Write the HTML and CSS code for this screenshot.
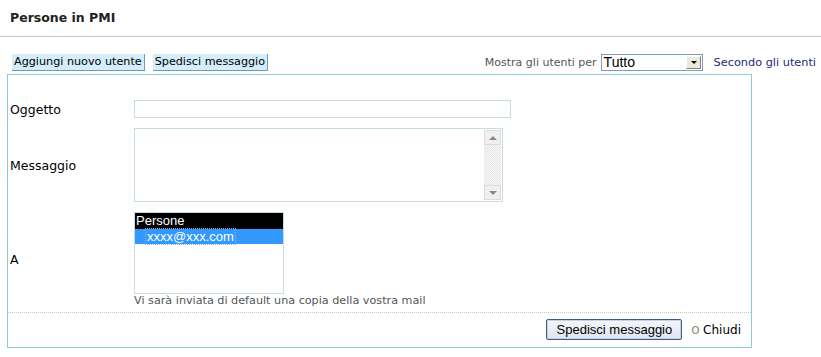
FILE: index.html
```html
<!DOCTYPE html>
<html lang="it">
<head>
  <meta charset="UTF-8">
  <title>Persone in PMI</title>
  <link rel="stylesheet" href="styles.css">
</head>
<body>
  <h2 class="page-title">Persone in PMI</h2>

  <div class="toolbar">
    <div class="toolbar-left">
      <button class="tab-btn">Aggiungi nuovo utente</button>
      <button class="tab-btn">Spedisci messaggio</button>
    </div>
    <div class="toolbar-right">
      <span class="filter-label">Mostra gli utenti per</span>
      <div class="fake-select">
        <span class="fake-select-value">Tutto</span>
        <span class="fake-select-arrow"></span>
      </div>
      <a class="sort-link" href="#">Secondo gli utenti</a>
    </div>
  </div>

  <div class="message-panel">
    <form class="message-form">
      <div class="form-row">
        <label class="form-label">Oggetto</label>
        <input type="text" class="subject-input">
      </div>

      <div class="form-row">
        <label class="form-label">Messaggio</label>
        <div class="textarea-box">
          <textarea class="message-text"></textarea>
          <div class="fake-scroll">
            <span class="scroll-btn up"></span>
            <span class="scroll-track"></span>
            <span class="scroll-btn down"></span>
          </div>
        </div>
      </div>

      <div class="form-row">
        <label class="form-label">A</label>
        <div class="recipients">
          <div class="listbox">
            <div class="list-group">Persone</div>
            <div class="list-item selected"><span>xxxx@xxx.com</span></div>
          </div>
          <p class="hint">Vi sarà inviata di default una copia della vostra mail</p>
        </div>
      </div>
    </form>

    <div class="panel-footer">
      <button class="send-btn">Spedisci messaggio</button>
      <span class="close-link"><span class="bullet">O</span> Chiudi</span>
    </div>
  </div>
</body>
</html>
```

FILE: styles.css
```css
body {
  margin: 0;
  font-family: "DejaVu Sans", Verdana, sans-serif;
  font-size: 12px;
  color: #000;
  background: #fff;
}
.page-title {
  margin: 0;
  padding: 10px 10px 0;
  height: 26px;
  font-size: 12.5px;
  font-weight: bold;
  color: #222;
  border-bottom: 1px solid #c8c8c8;
}
.toolbar {
  display: flex;
  justify-content: space-between;
  align-items: center;
  margin-top: 15px;
  padding-left: 12px;
  padding-right: 5px;
  height: 20px;
}
.toolbar-left {
  display: flex;
  gap: 8px;
}
.tab-btn {
  font-family: "DejaVu Sans", Verdana, sans-serif;
  font-size: 11.2px;
  height: 17px;
  padding: 0 2px;
  background: #d3eef9;
  border: none;
  border-right: 1px solid #6f9cb4;
  border-bottom: 1px solid #6f9cb4;
  color: #000;
  cursor: pointer;
}
.toolbar-right {
  display: flex;
  align-items: center;
}
.filter-label {
  font-size: 11px;
  color: #555;
  margin-right: 4px;
}
.fake-select {
  display: flex;
  align-items: center;
  justify-content: space-between;
  width: 98px;
  height: 15px;
  border: 1px solid #7f9db9;
  padding-left: 2px;
  font-family: "Liberation Sans", Arial, sans-serif;
  font-size: 14px;
}
.fake-select-arrow {
  width: 15px;
  height: 13px;
  margin-right: 1px;
  background: #ece9d8;
  border: 1px solid #fff;
  border-right-color: #808080;
  border-bottom-color: #808080;
  box-sizing: border-box;
  position: relative;
}
.fake-select-arrow::after {
  content: "";
  position: absolute;
  left: 4px;
  top: 4px;
  border-left: 3px solid transparent;
  border-right: 3px solid transparent;
  border-top: 3px solid #000;
}
.sort-link {
  margin-left: 11px;
  font-size: 11.3px;
  color: #1c2a7a;
  text-decoration: none;
}
.message-panel {
  margin: 2px 0 0 7px;
  width: 743px;
  border: 1px solid #8ccad6;
}
.message-form {
  padding: 25px 0 0 2px;
}
.form-row {
  display: flex;
  align-items: center;
  margin-bottom: 10px;
}
.form-label {
  width: 124px;
  font-size: 12.5px;
}
.subject-input {
  width: 375px;
  height: 16px;
  padding: 0;
  border: 1px solid #c5dce2;
}
.textarea-box {
  display: flex;
  width: 367px;
  height: 72px;
  border: 1px solid #c5dce2;
}
.message-text {
  flex: 1;
  border: none;
  resize: none;
  outline: none;
}
.fake-scroll {
  display: flex;
  flex-direction: column;
  width: 17px;
  margin: 1px 1px 1px 0;
}
.scroll-btn {
  height: 15px;
  background: #f0f0f0;
  border: 1px solid #dcdcdc;
  box-sizing: border-box;
  position: relative;
}
.scroll-btn::after {
  content: "";
  position: absolute;
  left: 4px;
  top: 5px;
  border-left: 4px solid transparent;
  border-right: 4px solid transparent;
}
.scroll-btn.up::after {
  border-bottom: 4px solid #888;
}
.scroll-btn.down::after {
  border-top: 4px solid #888;
}
.scroll-track {
  flex: 1;
  background: repeating-conic-gradient(#e4e4e4 0 25%, #fafafa 0 50%) 0 0 / 2px 2px;
}
.listbox {
  width: 148px;
  height: 80px;
  border: 1px solid #c5dce2;
  font-family: "Liberation Sans", Arial, sans-serif;
  font-size: 13px;
}
.list-group {
  background: #000;
  color: #fff;
  height: 16px;
  line-height: 16px;
  padding-left: 1px;
}
.list-item {
  height: 15px;
  line-height: 15px;
  padding-left: 11px;
}
.list-item.selected {
  background: #3399ff;
  color: #fff;
}
.list-item.selected span {
  outline: 1px dotted #7fb9f0;
  padding: 0 1px;
}
.hint {
  margin: 0;
  font-size: 11.2px;
  color: #555;
}
.panel-footer {
  display: flex;
  justify-content: flex-end;
  align-items: center;
  gap: 9px;
  margin-top: -5px;
  border-top: 1px dotted #c8c8c8;
  padding: 6px 10px 7px;
}
.send-btn {
  font-family: "Liberation Sans", Arial, sans-serif;
  font-size: 13px;
  width: 136px;
  height: 21px;
  padding: 0;
  background: linear-gradient(#f4f6fa, #dfe4ee);
  border: 1px solid #3c5a8a;
  border-radius: 2px;
  box-shadow: inset 0 0 0 1px #c6d2e6;
  color: #000;
}
.close-link {
  font-size: 12px;
}
.bullet {
  font-size: 10px;
  color: #777;
}
```
